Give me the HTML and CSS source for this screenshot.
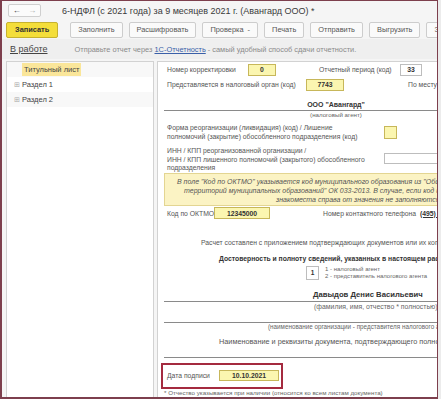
FILE: index.html
```html
<!DOCTYPE html>
<html lang="ru">
<head>
<meta charset="utf-8">
<link rel="stylesheet" href="styles.css">
</head>
<body>
<div class="window">
  <div class="titlebar">
    <div class="nav">
      <span class="nav-btn">&#8592;</span>
      <span class="nav-btn dim">&#8594;</span>
    </div>
    <div class="title">6-НДФЛ (с 2021 года) за 9 месяцев 2021 г. (Авангард ООО) *</div>
  </div>
  <div class="toolbar">
    <span class="btn primary">Записать</span>
    <span class="btn">Заполнить</span>
    <span class="btn">Расшифровать</span>
    <span class="btn">Проверка &nbsp;-</span>
    <span class="btn">Печать</span>
    <span class="btn">Отправить</span>
    <span class="btn">Выгрузить</span>
    <span class="btn">Загрузить</span>
  </div>
  <div class="status">
    <span class="state">В работе</span>
    <span class="msg">Отправьте отчет через <span class="link">1С-Отчетность</span> - самый удобный способ сдачи отчетности.</span>
  </div>
  <div class="main">
    <div class="tree">
      <div class="row odd"><span class="sel">Титульный лист</span></div>
      <div class="row"><span class="plus">&#8862;</span>Раздел 1</div>
      <div class="row odd"><span class="plus">&#8862;</span>Раздел 2</div>
    </div>
    <div class="panel">
      <div class="form">
        <div class="frow r1">
          <span class="lbl w-korr">Номер корректировки</span>
          <span class="fld y w27">0</span>
          <span class="lbl gap-per">Отчетный период (код)</span>
          <span class="fld white w22">33</span>
        </div>
        <div class="frow r2">
          <span class="lbl w-organ">Представляется в налоговый орган (код)</span>
          <span class="fld y w38">7743</span>
          <span class="lbl gap-mest">По месту учета (код)</span>
        </div>
        <div class="center bold org">ООО "Авангард"</div>
        <div class="hline first"></div>
        <div class="center note agent">(налоговый агент)</div>
        <div class="frow reorg">
          <span class="lbl multi w-reorg">Форма реорганизации (ликвидация) (код) / Лишение<br>полномочий (закрытие) обособленного подразделения (код)</span>
          <span class="fld y sq"></span>
        </div>
        <div class="frow inn">
          <span class="lbl multi w-reorg">ИНН / КПП реорганизованной организации /<br>ИНН / КПП лишенного полномочий (закрытого) обособленного<br>подразделения</span>
          <span class="fld white wide"></span>
        </div>
        <div class="info">
          <span class="l1">В поле "Код по ОКТМО" указывается код муниципального образования из "Общероссийского классификатора</span>
          <span class="l2">территорий муниципальных образований" ОК 033-2013. В случае, если код имеет восемь знаков, свободные</span>
          <span class="l3">знакоместа справа от значения не заполняются.</span>
        </div>
        <div class="frow oktmo">
          <span class="lbl w-oktmo">Код по ОКТМО</span>
          <span class="fld y w56">12345000</span>
          <span class="lbl gap-tel">Номер контактного телефона</span>
          <span class="tel">(495) 123-45-67</span>
        </div>
        <div class="para raschet">Расчет составлен с приложением подтверждающих документов или их копий на</div>
        <div class="para bold dostov">Достоверность и полноту сведений, указанных в настоящем расчете, подтверждаю:</div>
        <div class="frow podp">
          <span class="fld white box1">1</span>
          <span class="legend">1 - налоговый агент<br>2 - представитель налогового агента</span>
        </div>
        <div class="para bold fio">Давыдов Денис Васильевич</div>
        <div class="hline fio-line"></div>
        <div class="para note fio-note">(фамилия, имя, отчество * полностью)</div>
        <div class="hline l2gap"></div>
        <div class="para note org-note">(наименование организации - представителя налогового агента)</div>
        <div class="para naim">Наименование и реквизиты документа, подтверждающего полномочия представителя</div>
        <div class="hline l3gap"></div>
        <div class="datebox">
          <span class="lbl w-date">Дата подписи</span>
          <span class="fld y w60">10.10.2021</span>
        </div>
        <div class="para note footnote">* Отчество указывается при наличии (относится ко всем листам документа)</div>
      </div>
    </div>
  </div>
</div>
</body>
</html>
```

FILE: styles.css
```css
html, body {
  margin: 0;
  padding: 0;
  background: #ececec;
}
body {
  font-family: "Liberation Sans", Arial, sans-serif;
  color: #333;
}
.window {
  width: 438px;
  height: 399px;
  box-sizing: border-box;
  border: 1px solid #7d3f4d;
  border-left-width: 2px;
  border-bottom-width: 2px;
  background: #f5f5f5;
  display: flex;
  flex-direction: column;
  overflow: hidden;
}
.titlebar {
  height: 19px;
  display: flex;
  align-items: center;
  padding-left: 6px;
  flex-shrink: 0;
}
.nav {
  display: flex;
  width: 33px;
  height: 13px;
  border: 1px solid #cfcfcf;
  border-radius: 2px;
  background: #fbfbfb;
  align-items: center;
  justify-content: space-around;
  font-size: 8px;
  color: #333;
  box-sizing: border-box;
}
.nav-btn.dim { color: #aaa; }
.title {
  margin-left: 21px;
  font-size: 9px;
  color: #3a3a3a;
  white-space: nowrap;
}
.toolbar {
  height: 19px;
  display: flex;
  align-items: center;
  gap: 6px;
  padding-left: 4px;
  flex-shrink: 0;
  white-space: nowrap;
}
.btn {
  height: 16px;
  box-sizing: border-box;
  border: 1px solid #cdcdcd;
  border-radius: 2px;
  background: #fafafa;
  font-size: 7.4px;
  color: #555;
  display: flex;
  align-items: center;
  padding: 0 7px;
}
.btn.primary {
  background: #f4de3a;
  border-color: #c6b22f;
  color: #333;
  font-weight: bold;
  padding: 0 8px;
  margin-right: 6px;
}
.status {
  height: 20px;
  display: flex;
  align-items: center;
  padding-left: 8px;
  flex-shrink: 0;
  white-space: nowrap;
  background: #efefef;
}
.state {
  font-size: 9px;
  color: #444;
  text-decoration: underline;
  margin-right: 27px;
}
.msg {
  font-size: 7.4px;
  color: #8a8a8a;
}
.link {
  color: #3a5fa8;
  text-decoration: underline;
}
.main {
  flex: 1;
  display: flex;
  gap: 3px;
  padding: 2px 0 0 4px;
  min-height: 0;
}
.tree {
  width: 148px;
  box-sizing: border-box;
  border: 1px solid #d2d2d2;
  border-bottom: none;
  background: #fff;
  font-size: 7.5px;
  color: #444;
}
.row {
  height: 15px;
  display: flex;
  align-items: center;
  padding-left: 15px;
  white-space: nowrap;
}
.row.odd { background: #f8f8f8; }
.sel {
  background: #fae69a;
  padding: 2px 2px;
}
.plus {
  font-size: 7px;
  color: #aaa;
  width: 8px;
  margin-left: -8px;
}
.panel {
  flex: 1;
  background: #fff;
  border: 1px solid #d2d2d2;
  border-right: none;
  border-bottom: none;
  overflow: hidden;
  min-width: 0;
}
.form {
  width: 360px;
  padding-left: 6px;
  font-size: 6.8px;
  color: #555;
  white-space: nowrap;
}
.frow {
  display: flex;
  align-items: center;
}
.lbl { flex-shrink: 0; }
.fld {
  box-sizing: border-box;
  border: 1px solid #c7b75a;
  background: #fbf6b0;
  height: 12px;
  display: flex;
  align-items: center;
  justify-content: center;
  font-weight: bold;
  color: #333;
  font-size: 6.8px;
  flex-shrink: 0;
}
.fld.white {
  background: #fff;
  border-color: #bdbdbd;
}
.r1 { height: 13px; margin-top: 1px; padding-left: 3px; }
.w-korr { width: 81px; }
.w27 { width: 28px; }
.gap-per { margin-left: 43px; width: 81px; }
.w22 { width: 22px; }
.r2 { height: 13px; margin-top: 2px; padding-left: 3px; }
.w-organ { width: 139px; }
.w38 { width: 38px; }
.gap-mest { margin-left: 64px; }
.center { text-align: center; }
.bold { font-weight: bold; color: #333; }
.org { font-size: 7px; margin-top: 10px; width: 344px; }
.hline {
  height: 1px;
  background: #8a8a8a;
}
.first { margin-top: 2px; }
.note { font-size: 6.3px; color: #666; }
.agent { width: 344px; font-size: 6.2px; }
.reorg { margin-top: 6px; padding-left: 3px; }
.multi { line-height: 8.5px; }
.w-reorg { width: 217px; }
.sq { width: 13px; height: 13px; }
.inn { margin-top: 6px; padding-left: 3px; }
.wide { width: 80px; height: 11px; margin-bottom: 3px; }
.info {
  margin-top: 0;
  height: 33px;
  box-sizing: border-box;
  background: #fbf3c4;
  border: 1px solid #e3d592;
  font-style: italic;
  color: #555;
  font-size: 7px;
  line-height: 9px;
  padding-top: 3px;
  display: flex;
  flex-direction: column;
}
.info .l1 { padding-left: 12px; }
.info .l2 { padding-left: 19px; }
.info .l3 { padding-left: 111px; }
.oktmo { margin-top: 1px; height: 13px; padding-left: 3px; }
.w-oktmo { width: 47px; }
.w56 { width: 56px; }
.gap-tel { margin-left: 53px; width: 97px; }
.tel {
  font-weight: bold;
  color: #333;
  text-decoration: underline;
}
.raschet { margin-top: 19px; padding-left: 37px; }
.dostov { margin-top: 9px; padding-left: 55px; font-size: 6.8px; }
.podp { margin-top: 4px; padding-left: 142px; align-items: flex-start; }
.box1 { width: 13px; height: 14px; font-size: 6.5px; }
.legend { font-size: 6px; color: #666; line-height: 7.5px; margin-left: 6px; }
.fio { margin-top: 9px; padding-left: 149px; font-size: 7.7px; }
.fio-line { margin-top: 2px; }
.fio-note { padding-left: 150px; margin-top: 1px; font-size: 6.9px; }
.l2gap { margin-top: 12px; }
.org-note { padding-left: 104px; margin-top: 0; }
.naim { font-size: 7.3px; color: #555; padding-left: 55px; margin-top: 7px; }
.l3gap { margin-top: 11px; }
.datebox {
  margin-top: 5px;
  margin-left: -3px;
  width: 122px;
  height: 26px;
  box-sizing: border-box;
  border: 2px solid #a42a3f;
  display: flex;
  align-items: center;
  padding-left: 4px;
}
.w-date { width: 52px; }
.w60 { width: 60px; height: 11px; }
.footnote { margin-top: 0; font-size: 6.2px; }
```
